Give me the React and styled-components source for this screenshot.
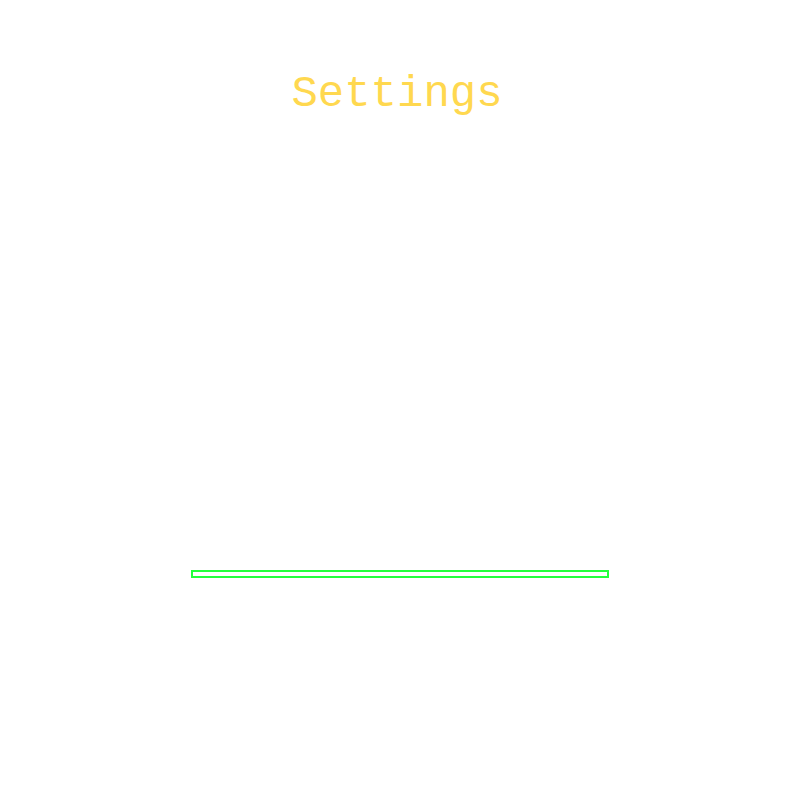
import React from 'react';
import styled, { createGlobalStyle } from 'styled-components';

const GlobalStyle = createGlobalStyle`
  html, body {
    margin: 0;
    padding: 0;
    background: #fff;
  }
`;

const Screen = styled.main`
  width: 800px;
  height: 800px;
  display: flex;
  flex-direction: column;
  align-items: center;
  box-sizing: border-box;
  padding-top: 68px;
`;

const Title = styled.h1`
  margin: 0;
  font-family: "Liberation Mono", "DejaVu Sans Mono", monospace;
  font-size: 44px;
  line-height: 52px;
  font-weight: 400;
  color: #ffd84f;
  transform: translateX(-3px);
`;

const Track = styled.div`
  margin-top: 450px;
  width: 418px;
  height: 8px;
  box-sizing: border-box;
  border: 2px solid #22ff3c;
`;

const Fill = styled.div`
  height: 100%;
  background: #22ff3c;
`;

const App = () => {
  const progress = 0;
  return (
    <Screen>
      <GlobalStyle />
      <Title>Settings</Title>
      <Track>
        <Fill style={{ width: `${progress}%` }} />
      </Track>
    </Screen>
  );
};

export default App;
